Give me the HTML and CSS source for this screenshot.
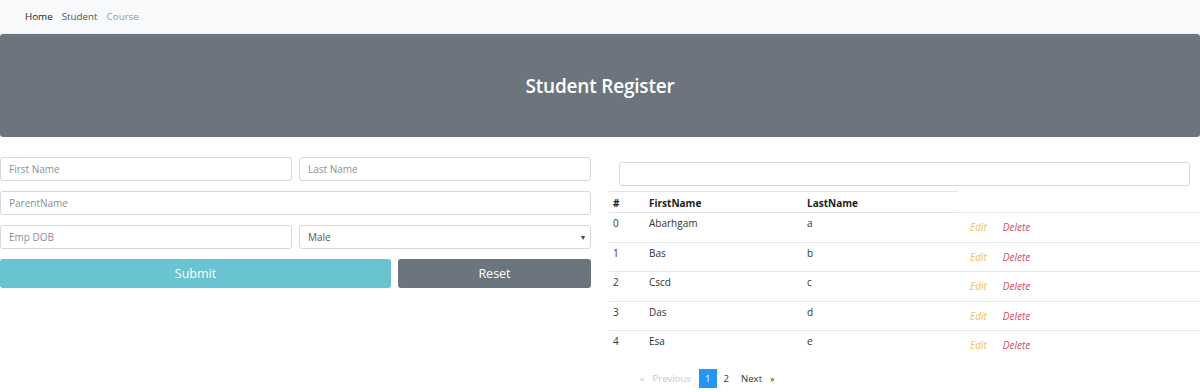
FILE: index.html
```html
<!DOCTYPE html>
<html lang="en">
<head>
  <meta charset="UTF-8" />
  <title>Student Register</title>
  <link rel="stylesheet" href="styles.css">
</head>
<body>

  <nav class="navbar">
    <a href="#" class="nav-link active">Home</a>
    <a href="#" class="nav-link">Student</a>
    <a href="#" class="nav-link muted">Course</a>
  </nav>

  <div class="jumbotron">
    <h1>Student Register</h1>
  </div>

  <div class="main">
    <form class="student-form">
      <div class="form-row">
        <input type="text" class="form-control" placeholder="First Name">
        <input type="text" class="form-control" placeholder="Last Name">
      </div>
      <div class="form-row single">
        <input type="text" class="form-control" placeholder="ParentName">
      </div>
      <div class="form-row">
        <input type="text" class="form-control" placeholder="Emp DOB">
        <div class="select-wrap">
          <select class="form-control">
            <option>Male</option>
            <option>Female</option>
          </select>
        </div>
      </div>
      <div class="form-row buttons">
        <button type="button" class="btn btn-info">Submit</button>
        <button type="button" class="btn btn-secondary">Reset</button>
      </div>
    </form>

    <div class="list">
      <input type="text" class="form-control search">
      <table class="table">
        <thead>
          <tr>
            <th class="col-id">#</th>
            <th class="col-first">FirstName</th>
            <th class="col-last">LastName</th>
          </tr>
        </thead>
        <tbody id="rows"></tbody>
      </table>
      <div class="pagination">
        <span class="page disabled arrow">&laquo;</span>
        <span class="page disabled">Previous</span>
        <span class="page current">1</span>
        <span class="page">2</span>
        <span class="page next">Next</span>
        <span class="page arrow">&raquo;</span>
      </div>
    </div>
  </div>

  <script>
    const students = [
      { first: "Abarhgam", last: "a" },
      { first: "Bas", last: "b" },
      { first: "Cscd", last: "c" },
      { first: "Das", last: "d" },
      { first: "Esa", last: "e" }
    ];

    const tbody = document.getElementById("rows");
    students.forEach((s, i) => {
      const tr = document.createElement("tr");
      tr.innerHTML = `<td>${i}</td><td>${s.first}</td><td>${s.last}</td>
        <td class="actions"><a href="#" class="edit">Edit</a><a href="#" class="delete">Delete</a></td>`;
      tbody.appendChild(tr);
    });
  </script>
</body>
</html>
```

FILE: styles.css
```css
body {
  font-family: 'Open Sans', 'Noto Sans', sans-serif;
  font-size: 10.5px;
  color: #333;
  margin: 0;
  background: #fff;
  overflow: hidden;
}

a {
  text-decoration: none;
}

.navbar {
  background: #f8f9fa;
  height: 33px;
  display: flex;
  align-items: center;
  padding-left: 25px;
  gap: 9px;
  border-bottom: 1px solid #eef0f2;
}

.nav-link {
  color: #555;
  font-size: 9.8px;
}

.nav-link.active {
  color: #222;
}

.nav-link.muted {
  color: #999;
}

.jumbotron {
  background: #6c757d;
  height: 103px;
  border-radius: 3px;
  display: flex;
  align-items: center;
  justify-content: center;
}

.jumbotron h1 {
  color: #fff;
  font-size: 19px;
  font-weight: 600;
  margin: 0;
  letter-spacing: -0.2px;
}

.main {
  display: grid;
  grid-template-columns: 591px 1fr;
  column-gap: 9px;
  margin-top: 20px;
}

.form-row {
  display: grid;
  grid-template-columns: 1fr 1fr;
  gap: 7px;
  margin-bottom: 10px;
}

.form-row.single {
  grid-template-columns: 1fr;
}

.form-row.buttons {
  grid-template-columns: 391px 1fr;
}

.form-control {
  box-sizing: border-box;
  width: 100%;
  height: 24px;
  border: 1px solid #d6d9dc;
  border-radius: 3px;
  padding: 0 8px;
  font-family: inherit;
  font-size: 10px;
  color: #555;
  background: #fff;
}

.form-control::placeholder {
  color: #8a8f94;
}

.select-wrap {
  position: relative;
}

.select-wrap select {
  appearance: none;
  -webkit-appearance: none;
}

.select-wrap::after {
  content: "▾";
  position: absolute;
  right: 6px;
  top: 6px;
  font-size: 8px;
  color: #444;
}

.btn {
  height: 29px;
  border: none;
  border-radius: 3px;
  color: #fff;
  font-family: inherit;
  font-size: 12.5px;
  cursor: pointer;
}

.btn-info {
  background: #69c3d1;
}

.btn-secondary {
  background: #6c757d;
}

.search {
  display: block;
  margin: 5px 0 5px 19px;
  width: 571px;
}

.table {
  border-collapse: collapse;
  width: 591px;
  margin-left: 9px;
  margin-top: 1px;
}

.table th {
  text-align: left;
  font-weight: 700;
  font-size: 10px;
  color: #222;
  padding: 4px 4px 2px;
  height: 13px;
  border-top: 1px solid #e2e4e6;
  border-bottom: 1px solid #e2e4e6;
}

.col-id { width: 28px; }
.col-first { width: 150px; }
.col-last { width: 147px; }

.table tbody tr {
  height: 29.5px;
}

.table td {
  border-top: 1px solid #e6e8ea;
  padding: 3px 4px 0;
  line-height: 14px;
  vertical-align: top;
  font-size: 10px;
  color: #333;
}

.table td.actions {
  padding: 7px 0 0 12px;
}

.actions a {
  font-style: italic;
  font-size: 10px;
  margin-right: 16px;
}

.edit {
  color: #f2c25a;
}

.delete {
  color: #dc4a5a;
}

.pagination {
  display: flex;
  align-items: center;
  margin: 9px 0 0 40px;
  font-size: 9.6px;
}

.page {
  padding: 3px 0;
  color: #333;
}

.page.disabled {
  color: #c5c8cb;
}

.page.arrow {
  font-size: 9px;
}

.page.disabled.arrow {
  margin-right: 8px;
}

.page.current {
  background: #2196f3;
  color: #fff;
  padding: 3px 6px;
  margin: 0 7px 0 8px;
}

.page.next {
  margin: 0 8px 0 12px;
}
```
